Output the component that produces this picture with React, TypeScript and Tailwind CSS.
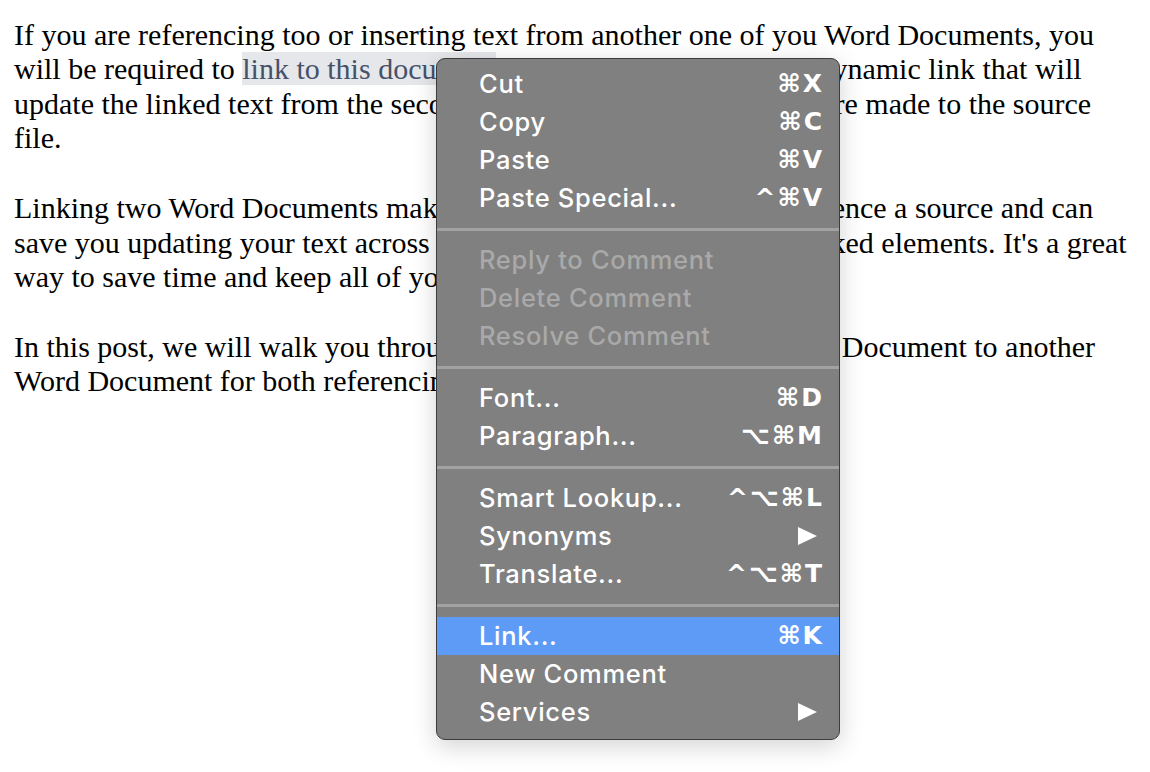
import React from "react";

type Item = {
  label: string;
  shortcut?: string;
  submenu?: boolean;
  disabled?: boolean;
  active?: boolean;
};

const groups: Item[][] = [
  [
    { label: "Cut", shortcut: "⌘X" },
    { label: "Copy", shortcut: "⌘C" },
    { label: "Paste", shortcut: "⌘V" },
    { label: "Paste Special...", shortcut: "^⌘V" },
  ],
  [
    { label: "Reply to Comment", disabled: true },
    { label: "Delete Comment", disabled: true },
    { label: "Resolve Comment", disabled: true },
  ],
  [
    { label: "Font...", shortcut: "⌘D" },
    { label: "Paragraph...", shortcut: "⌥⌘M" },
  ],
  [
    { label: "Smart Lookup...", shortcut: "^⌥⌘L" },
    { label: "Synonyms", submenu: true },
    { label: "Translate...", shortcut: "^⌥⌘T" },
  ],
  [
    { label: "Link...", shortcut: "⌘K", active: true },
    { label: "New Comment" },
    { label: "Services", submenu: true },
  ],
];

function Arrow() {
  return (
    <svg width="19" height="18" viewBox="0 0 19 18" className="mr-[4px]">
      <polygon points="0,0 19,9 0,18" fill="#ffffff" />
    </svg>
  );
}

function MenuRow({ item }: { item: Item }) {
  return (
    <div
      className={
        "flex h-[38px] items-center justify-between pl-[42px] pr-[18px] " +
        (item.active ? "bg-[#5e9bf6] " : "") +
        (item.disabled ? "text-[#a9a9a9]" : "text-white")
      }
    >
      <span>{item.label}</span>
      {item.shortcut && (
        <span className="mr-[-3px] text-[25px] font-semibold tracking-[2px] [font-family:'DejaVu_Sans',Inter,sans-serif]">
          {item.shortcut}
        </span>
      )}
      {item.submenu && <Arrow />}
    </div>
  );
}

function ContextMenu() {
  return (
    <div className="absolute left-[436px] top-[58px] w-[404px] rounded-[9px] border border-[#3c3c3c] bg-[#808080] pb-[8px] pt-[6px] text-[25.5px] font-medium tracking-[0.7px] [font-family:Inter,'Noto_Sans',sans-serif] shadow-[0_6px_24px_rgba(0,0,0,0.18)]">
      {groups.map((g, gi) => (
        <div key={gi}>
          {gi > 0 && (
            <div className="flex h-[24px] items-center">
              <div className="h-[3px] w-full bg-[#a2a2a2]" />
            </div>
          )}
          {g.map((item) => (
            <MenuRow key={item.label} item={item} />
          ))}
        </div>
      ))}
    </div>
  );
}

// the middle of most lines sits under the menu
const lines = [
  [
    <>If you are referencing too or inserting text from another one of you Word Documents, you</>,
    <>
      will be required to{" "}
      <span className="bg-[#e6e7ea] text-[#45526a]">link to this document</span> as well. This will
      create a dynamic link that will
    </>,
    <>update the linked text from the second document when all changes are made to the source</>,
    <>file.</>,
  ],
  [
    <>Linking two Word Documents makes it easy when you need to reference a source and can</>,
    <>save you updating your text across multiple documents using the linked elements. It's a great</>,
    <>way to save time and keep all of your documents up to date.</>,
  ],
  [
    <>In this post, we will walk you through how to link a Microsoft Word Document to another</>,
    <>Word Document for both referencing and embedding.</>,
  ],
];

export default function App() {
  return (
    <div className="relative h-[772px] w-[1150px] overflow-hidden bg-white">
      <div className="px-[14px] pt-[18px] text-[30px] leading-[34.4px] text-black [font-family:'Liberation_Serif','Times_New_Roman',serif]">
        {lines.map((p, pi) => (
          <div key={pi} className="mb-[35.6px]">
            {p.map((l, li) => (
              <div key={li} className="whitespace-nowrap">
                {l}
              </div>
            ))}
          </div>
        ))}
      </div>
      <ContextMenu />
    </div>
  );
}
